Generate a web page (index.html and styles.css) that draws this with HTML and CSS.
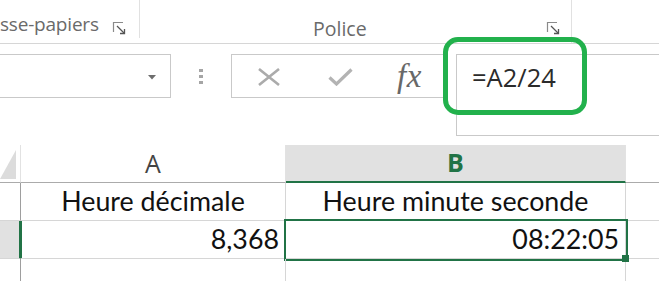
FILE: index.html
```html
<!DOCTYPE html>
<html lang="fr">
<head>
<meta charset="utf-8">
<link rel="stylesheet" href="styles.css">
</head>
<body>
<div class="app">
  <div class="ribbon">
    <div class="group group-clip">
      <span class="group-label">sse-papiers</span>
      <svg class="launcher" width="14" height="14" viewBox="0 0 14 14"><path d="M1.5 11V1.5H11" fill="none" stroke="#8a8a8a" stroke-width="1.2"/><path d="M5 5L12 12" stroke="#555" stroke-width="1.3"/><path d="M8 12.5H12.5V8" fill="none" stroke="#555" stroke-width="1.3"/></svg>
    </div>
    <div class="group group-font">
      <span class="group-label">Police</span>
      <svg class="launcher" width="14" height="14" viewBox="0 0 14 14"><path d="M1.5 11V1.5H11" fill="none" stroke="#8a8a8a" stroke-width="1.2"/><path d="M5 5L12 12" stroke="#555" stroke-width="1.3"/><path d="M8 12.5H12.5V8" fill="none" stroke="#555" stroke-width="1.3"/></svg>
    </div>
    <div class="group group-rest"></div>
  </div>

  <div class="formula-row">
    <div class="name-box">
      <svg class="caret" width="8" height="5" viewBox="0 0 8 5"><path d="M0 0H8L4 4.5Z" fill="#6d6d6d"/></svg>
    </div>
    <div class="grip"><i></i><i></i><i></i></div>
    <div class="fx-box">
      <svg class="btn-x" width="24" height="18" viewBox="0 0 24 18"><path d="M2 1L22 17M22 1L2 17" stroke="#ababab" stroke-width="2.6"/></svg>
      <svg class="btn-ok" width="25" height="18" viewBox="0 0 25 18"><path d="M1.5 9.5L8.5 16L23.5 1.5" fill="none" stroke="#b3b3b3" stroke-width="3.2"/></svg>
      <span class="fx">fx</span>
    </div>
    <div class="formula-input">=A2/24</div>
    <div class="highlight"></div>
  </div>

  <div class="sheet">
    <div class="corner"><span class="tri"></span></div>
    <div class="colhead">A</div>
    <div class="colhead active">B</div>
    <div class="colhead rest"></div>

    <div class="rowhead"></div>
    <div class="cell center">Heure décimale</div>
    <div class="cell center">Heure minute seconde</div>
    <div class="cell rest"></div>

    <div class="rowhead active"></div>
    <div class="cell right">8,368</div>
    <div class="cell right selected">08:22:05<span class="handle"></span></div>
    <div class="cell rest"></div>

    <div class="rowhead last"></div>
    <div class="cell last"></div>
    <div class="cell last"></div>
    <div class="cell rest last"></div>
  </div>
</div>
</body>
</html>
```

FILE: styles.css
```css
html, body {
  margin: 0;
  padding: 0;
  background: #ffffff;
}
.app {
  width: 659px;
  height: 281px;
  overflow: hidden;
  position: relative;
  font-family: "Open Sans", "Noto Sans", sans-serif;
}

/* Ribbon */
.ribbon {
  display: flex;
  height: 43px;
  border-bottom: 1px solid #d6d6d6;
}
.group {
  display: flex;
  align-items: flex-end;
}
.group-label {
  font-size: 19.5px;
  color: #6a6a6a;
  line-height: 26px;
  padding-bottom: 1px;
}
.launcher {
  margin-bottom: 8px;
}
.group-clip {
  height: 38px;
  border-right: 1px solid #e1e1e1;
  box-sizing: border-box;
  width: 140px;
}
.group-clip .group-label {
  margin-right: 13px;
  font-size: 19px;
  letter-spacing: -0.2px;
}
.group-clip .launcher {
  margin-bottom: 3px;
}
.group-font {
  width: 432px;
  border-right: 1px solid #e1e1e1;
  padding-left: 173px;
  box-sizing: border-box;
}
.group-font .launcher {
  margin-left: auto;
  margin-right: 11px;
}
.group-rest {
  flex: 1;
}

/* Formula row */
.formula-row {
  position: relative;
  display: flex;
  align-items: flex-start;
  margin-top: 10px;
  height: 81px;
}
.name-box {
  width: 171px;
  height: 44px;
  box-sizing: border-box;
  border: 1px solid #c9c9c9;
  border-left: none;
  display: flex;
  align-items: center;
  justify-content: flex-end;
  padding-right: 14px;
}
.caret {
  margin-top: 2px;
}
.grip {
  width: 60px;
  height: 44px;
  display: flex;
  flex-direction: column;
  align-items: center;
  justify-content: center;
  gap: 3px;
}
.grip i {
  display: block;
  width: 4px;
  height: 3px;
  background: #a5a5a5;
}
.fx-box {
  width: 214px;
  height: 44px;
  box-sizing: border-box;
  border: 1px solid #c9c9c9;
  border-right: none;
  display: flex;
  align-items: center;
  padding-left: 25px;
}
.btn-x {
  margin-top: 2px;
}
.btn-ok {
  margin-left: 47px;
  margin-top: 2px;
}
.fx {
  font-family: "Liberation Serif", "DejaVu Serif", serif;
  font-style: italic;
  font-size: 33px;
  color: #686868;
  margin-left: 44px;
  letter-spacing: 0.5px;
}
.formula-input {
  margin-left: 11px;
  flex: 1;
  height: 82px;
  box-sizing: border-box;
  border: 1px solid #c9c9c9;
  border-right: none;
  font-family: "Open Sans", "Noto Sans", sans-serif;
  font-size: 25.5px;
  color: #2b2b2b;
  padding-left: 15px;
  padding-top: 1px;
  line-height: 42px;
}
.highlight {
  position: absolute;
  left: 443px;
  top: -17px;
  width: 144px;
  height: 78px;
  box-sizing: border-box;
  border: 5px solid #22b14c;
  border-radius: 15px;
}

/* Sheet */
.sheet {
  margin-top: 10px;
  display: grid;
  grid-template-columns: 21px 265px 340px 1fr;
  grid-template-rows: 38px 38px 38px 30px;
  font-family: "Lato", "Open Sans", sans-serif;
}
.corner {
  border-right: 1px solid #e2e2e2;
  border-bottom: 1px solid #ababab;
  position: relative;
}
.tri {
  position: absolute;
  left: 0;
  top: 5px;
  width: 0;
  height: 0;
  border-left: 16px solid transparent;
  border-bottom: 29px solid #dcdcdc;
}
.colhead {
  border-right: 1px solid #e2e2e2;
  border-bottom: 1px solid #ababab;
  font-family: "Open Sans", "Noto Sans", sans-serif;
  font-size: 25px;
  color: #444;
  text-align: center;
  line-height: 36px;
}
.colhead.active {
  background: #e1e1e1;
  color: #217346;
  font-weight: bold;
  border-bottom: 2px solid #217346;
  line-height: 35px;
}
.colhead.rest {
  border-right: none;
}
.rowhead {
  border-right: 1px solid #9e9e9e;
  border-bottom: 1px solid #d6d6d6;
}
.rowhead.active {
  background: #e1e1e1;
  border-right: 3px solid #217346;
  margin-right: -1px;
}
.rowhead.last, .cell.last {
  border-bottom: none;
}
.cell {
  border-right: 1px solid #d6d6d6;
  border-bottom: 1px solid #d6d6d6;
  font-size: 26.8px;
  color: #111;
  line-height: 37px;
  padding: 0 6px;
  white-space: nowrap;
  position: relative;
}
.cell.center {
  text-align: center;
}
.cell.right {
  text-align: right;
}
.cell.rest {
  border-right: none;
}
.cell.selected::after {
  content: "";
  position: absolute;
  left: -2px;
  top: -2px;
  right: -3px;
  bottom: -3px;
  border: 2px solid #217346;
  pointer-events: none;
}
.handle {
  position: absolute;
  right: -4px;
  bottom: -4px;
  width: 7px;
  height: 7px;
  background: #217346;
  z-index: 2;
}
```
